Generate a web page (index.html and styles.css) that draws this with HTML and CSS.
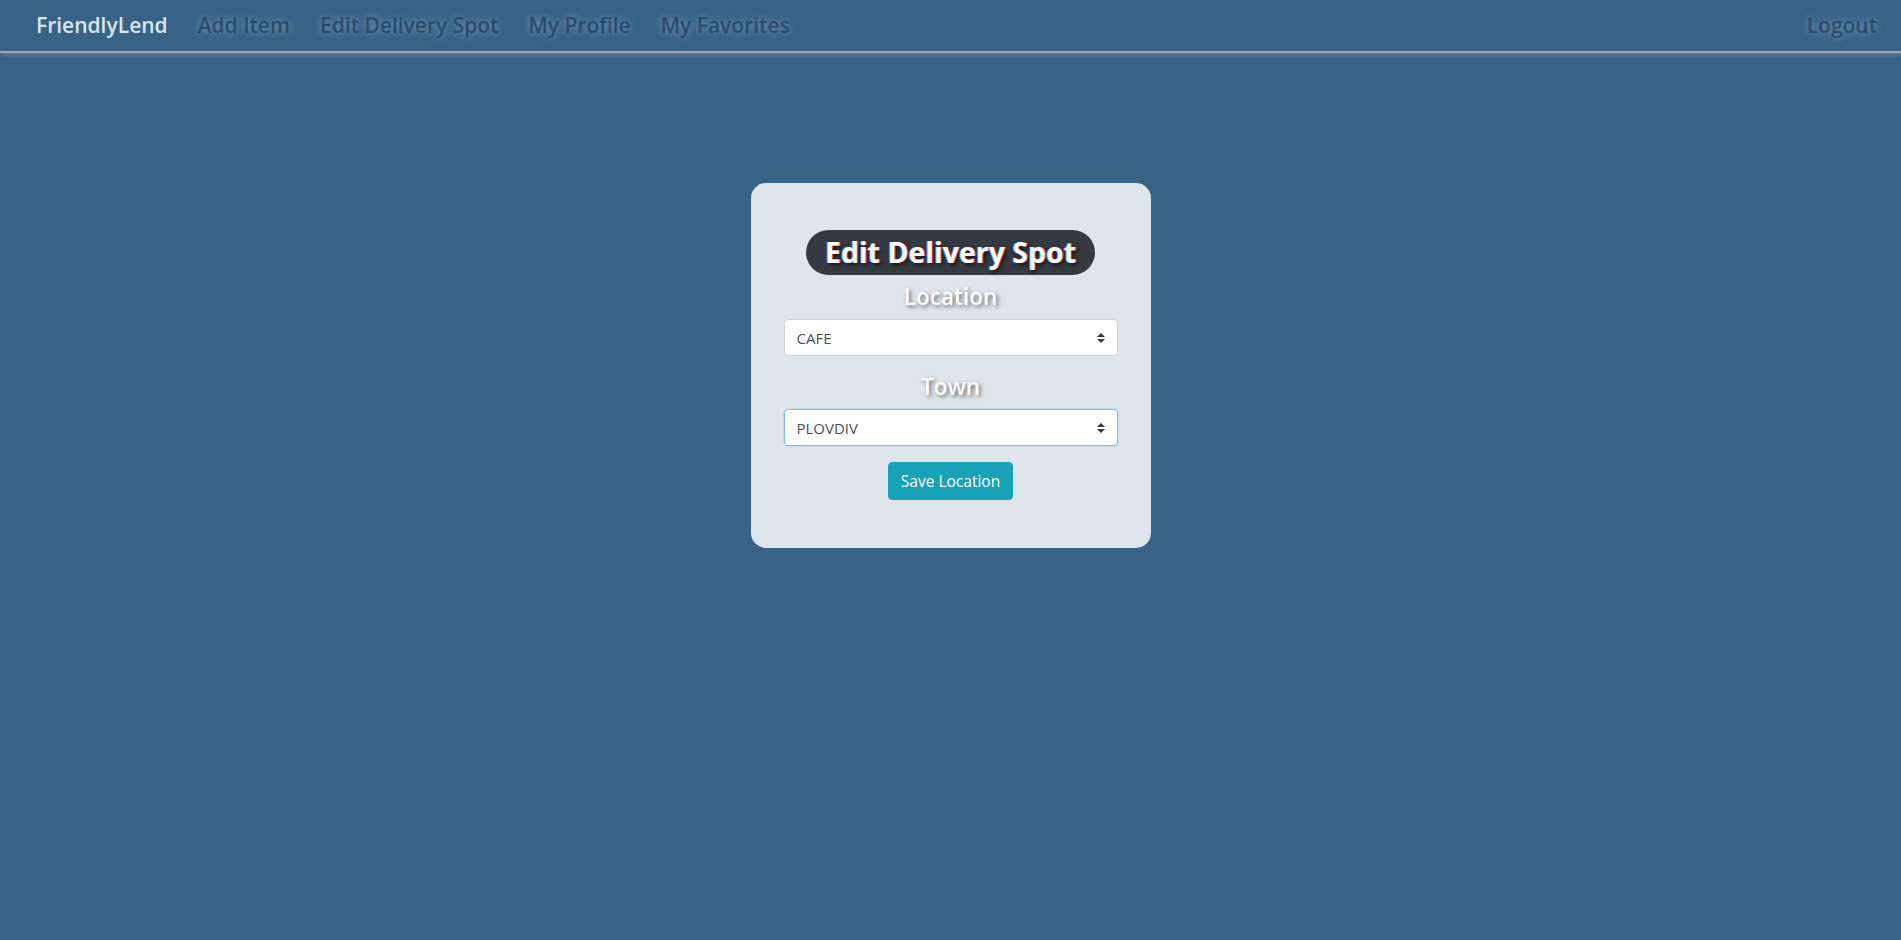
FILE: index.html
```html
<!DOCTYPE html>
<html lang="en">
<head>
<meta charset="utf-8">
<title>FriendlyLend - Edit Delivery Spot</title>
<link rel="stylesheet" href="styles.css">
</head>
<body>
<nav class="navbar">
  <div class="nav-left">
    <a class="brand" href="#">FriendlyLend</a>
    <a class="nav-link" href="#">Add Item</a>
    <a class="nav-link" href="#">Edit Delivery Spot</a>
    <a class="nav-link" href="#">My Profile</a>
    <a class="nav-link" href="#">My Favorites</a>
  </div>
  <a class="nav-link" href="#">Logout</a>
</nav>
<main class="page">
  <form class="card">
    <h2 class="title">Edit Delivery Spot</h2>
    <div class="group">
      <label class="label" for="location">Location</label>
      <select class="select" id="location">
        <option>CAFE</option>
      </select>
    </div>
    <div class="group">
      <label class="label" for="town">Town</label>
      <select class="select focused" id="town">
        <option>PLOVDIV</option>
      </select>
    </div>
    <button class="btn" type="button">Save Location</button>
  </form>
</main>
</body>
</html>
```

FILE: styles.css
```css
html, body {
  margin: 0;
  padding: 0;
}
body {
  background: #386386;
  font-family: "Open Sans", "Noto Sans", "Liberation Sans", sans-serif;
  min-height: 940px;
}
.navbar {
  height: 53px;
  box-sizing: border-box;
  display: flex;
  align-items: center;
  justify-content: space-between;
  padding: 0 24px 2px 36px;
  border-bottom: 2px solid #9aa8b5;
  box-shadow: 0 2px 4px rgba(150, 170, 190, 0.45);
}
.nav-left {
  display: flex;
  align-items: center;
  gap: 30px;
}
.navbar a {
  text-decoration: none;
  font-size: 21px;
  font-weight: 600;
  line-height: 28px;
}
.brand {
  color: #dae7f4;
}
.nav-link {
  color: #2b4a6b;
  text-shadow: 0 0 7px rgba(190, 215, 240, 0.5);
}
.page {
  display: flex;
  justify-content: center;
  padding-top: 130px;
}
.card {
  width: 400px;
  box-sizing: border-box;
  background: #dfe6eb;
  border-radius: 15px;
  padding: 47px 33px 48px;
  display: flex;
  flex-direction: column;
  align-items: center;
}
.title {
  margin: 0 0 7px;
  background: #343a40;
  color: #fff;
  border-radius: 23px;
  height: 45px;
  line-height: 45px;
  padding: 0 19px;
  font-size: 28.5px;
  font-weight: 700;
  text-shadow: -1px 0 0 rgba(60, 140, 255, 0.9), 1px 0 0 rgba(255, 60, 40, 0.85), 2px 2px 4px rgba(0, 0, 0, 0.7);
}
.group {
  width: 100%;
  display: flex;
  flex-direction: column;
  align-items: center;
  margin-bottom: 16px;
}
.label {
  display: block;
  height: 30px;
  line-height: 30px;
  margin: 0 0 7px;
  font-size: 22.5px;
  font-weight: 600;
  color: #fff;
  text-shadow: 2px 2px 4px rgba(0, 0, 0, 0.55);
}
.select {
  -webkit-appearance: none;
  appearance: none;
  width: 100%;
  height: 37px;
  box-sizing: border-box;
  padding: 6px 28px 6px 12px;
  font-family: "Open Sans", "Noto Sans", sans-serif;
  font-size: 15px;
  color: #495057;
  background: #fff url("data:image/svg+xml,%3csvg xmlns='http://www.w3.org/2000/svg' width='4' height='5' viewBox='0 0 4 5'%3e%3cpath fill='%23343a40' d='M2 0L0 2h4zm0 5L0 3h4z'/%3e%3c/svg%3e") no-repeat right 12px center / 8px 10px;
  border: 1px solid #ced4da;
  border-radius: 4px;
  outline: none;
}
.select.focused {
  border-color: #80bdff;
  box-shadow: 0 0 0 1px rgba(0, 123, 255, 0.12);
}
.btn {
  margin-top: 0;
  height: 38px;
  padding: 0 12px;
  border: 1px solid #17a2b8;
  border-radius: 4px;
  background: #17a2b8;
  color: #fff;
  font-family: "Open Sans", "Noto Sans", sans-serif;
  font-size: 15.5px;
  cursor: pointer;
}
```
